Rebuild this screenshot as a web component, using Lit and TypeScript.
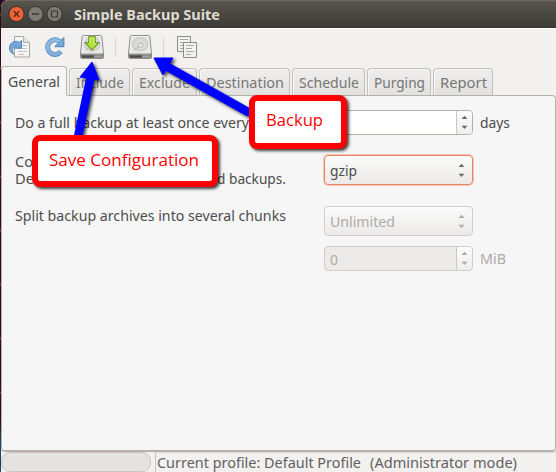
import { LitElement, html, svg, css } from "lit";
import { customElement } from "lit/decorators.js";

const label = (text: string, w: number, size = 15, cls = "") => html`
  <svg class="label ${cls}" width=${w} height="20" overflow="visible">
    <text x="0" y="15" font-size=${size} textLength=${w} lengthAdjust="spacingAndGlyphs">${text}</text>
  </svg>`;

const arrows = html`<svg class="arrows" width="7" height="15" viewBox="0 0 7 15">
  <path d="M0.5 4 3.5 0.8 6.5 4zM0.5 10.8 3.5 14 6.5 10.8z" fill="currentColor"/></svg>`;

const drive = (withArrow: boolean) => html`
  <svg width="24" height="24" viewBox="0 0 24 24">
    <path d="M3.4.5h17.2q1 0 1.2 1L23.5 18v4.5q0 1-1 1h-21q-1 0-1-1V18L2.2 1.5q.2-1 1.2-1z" fill="#dcdcda" stroke="#8f908d"/>
    <path d="M3.6 1.5h16.8l1.7 15.5H1.9z" fill="#e3e3e1" stroke="#f6f6f5" stroke-width=".8"/>
    <ellipse cx="12.2" cy="9.2" rx="7.6" ry="6.6" fill="#dadad8" stroke="#c2c2c0"/>
    <ellipse cx="12.6" cy="10.2" rx="2.5" ry="1.9" fill="#efefee" stroke="#adadab" stroke-width=".8"/>
    <path d="M11 12q-3 .5-5 3.5" fill="none" stroke="#b0b0ae"/>
    <path d="M1 18.8h22v3.5q0 .8-1 .8H2q-1 0-1-.8z" fill="#7b7c79"/>
    <path d="M1.5 18.8h21" stroke="#c4c4c2"/>
    <path d="M2 21.6h12" stroke="#4a4b49" stroke-width="2"/>
    <path d="M14 21.6h8" stroke="#a2a2a0" stroke-width="2"/>
    ${withArrow ? svg`<path d="M8.8 1.8h6.4v6h3.5L12 15 5.3 7.8h3.5z" fill="#b3e03f" stroke="#5c9511" stroke-width="1.1"/>
      <path d="M9.9 8.8V3h4.2v5.9h2.2" fill="none" stroke="#e0f79c" stroke-width=".8"/>` : ""}
  </svg>`;

@customElement("app-root")
export class AppRoot extends LitElement {
  static styles = css`
    :host { display: block; width: 556px; height: 472px; overflow: hidden; position: relative; background: linear-gradient(#0000 420px, #1d4468 440px), repeating-linear-gradient(#2c0a22 0 13px, #8c3f22 14px 15px, #2c0a22 16px 54px); font-family: "Noto Sans", sans-serif; color: #4c4c4c; }
    * { box-sizing: border-box; }
    svg { display: block; flex: none; }
    .label { fill: currentColor; font-family: "Noto Sans", sans-serif; }
    .window { margin-left: 1px; height: 472px; display: flex; flex-direction: column; background: #f2f1f0; border-radius: 7px 0 0 0; overflow: hidden; }
    .title { height: 28px; flex: none; display: flex; align-items: center; padding-left: 7px; background: linear-gradient(#57554d, #3c3b37); border-top: 1px solid #6a675f; border-bottom: 1px solid #35342f; color: #dfdbd2; }
    .title .label { font-weight: 700; margin: 2px 0 0 10px; }
    .tools { height: 38px; flex: none; display: flex; align-items: center; padding: 0 0 2px 8px; border-top: 1px solid #fff; }
    .t1 { margin-right: 14px; } .t2 { margin-right: 15px; }
    .sep { width: 1px; height: 20px; background: #d9d6d2; margin: 0 12px 0 11px; }
    .tabs { height: 30px; flex: none; display: flex; align-items: flex-end; gap: 2px; position: relative; z-index: 1; }
    .tab { height: 28px; border: 1px solid #c2bfba; border-bottom: 1px solid #b4b1ab; border-radius: 4px 4px 0 0; background: linear-gradient(#efeeed, #e3e1df); color: #777674; padding: 4px 0 0 6px; box-shadow: inset 1px 1px #f8f8f7; }
    .tab.on { height: 30px; background: #f6f6f6; color: #4c4c4c; border-color: #b6b3ad; border-bottom-color: #f6f6f6; padding: 5px 0 0 6px; }
    .page { flex: 1; margin-top: -1px; border: 1px solid #b6b3ad; border-bottom: 2px solid #b6b3ad; border-radius: 0 4px 4px 4px; background: #f6f6f6; padding: 14px 0 0 13px; display: grid; grid-template-columns: 309px 149px 1fr; grid-template-rows: 25px 20px 30px 21px 30px 10px 25px; }
    .page > * { min-width: 0; }
    .l1 { padding-top: 3px; }
    .two { grid-row: 3; grid-column: 1; margin-top: -3px; display: flex; flex-direction: column; height: 40px; }
    .two .label { height: 17px; }
    .line { display: flex; justify-content: space-between; width: 271px; }
    .spin { display: flex; border: 1px solid #b4b1ab; border-radius: 4px; background: #fff; overflow: hidden; height: 25px; }
    .field { flex: 1; padding: 3px 0 0 5px; }
    .step { width: 16px; border-left: 1px solid #cac7c3; background: linear-gradient(#fcfcfc, #efeeed); display: flex; align-items: center; justify-content: center; color: #6a6a69; }
    .combo { height: 30px; border: 1px solid #c0bdb8; border-radius: 4px; background: linear-gradient(#fbfbfb, #ebeae8); display: flex; align-items: center; justify-content: space-between; padding: 0 7px 0 5px; color: #4c4c4c; }
    .combo .label { margin-top: 2px; }
    .combo .arrows { color: #6a6a69; }
    .focus { border-color: #e58560; box-shadow: 0 0 0 1px #f4c9b7; }
    .off, .combo.off, .combo.off .arrows, .off .step { color: #aeaaa5; }
    .off { border-color: #d0cdc8; }
    .spin.off { background: #ebeae9; }
    .unit { padding: 3px 0 0 7px; }
    .r1 { grid-row: 1; } .r3 { grid-row: 3; } .r5 { grid-row: 5; } .r7 { grid-row: 7; }
    .c1 { grid-column: 1; } .c2 { grid-column: 2; } .c3 { grid-column: 3; }
    .status { height: 20px; flex: none; display: flex; color: #62605e; }
    .bar { width: 150px; height: 20px; border: 1px solid #c8c5c0; border-radius: 9px; background: #e4e3e2; margin-right: 4px; }
    .msg { flex: 1; display: flex; gap: 9px; border-left: 1px solid #c6c3be; border-top: 1px solid #dad8d4; padding: 0 0 0 1px; }
    .notes { position: absolute; left: 0; top: 0; z-index: 2; filter: drop-shadow(2px 2px 1.5px #000a); }
    .note { position: absolute; z-index: 3; border: 6px solid #f00; border-radius: 8px; background: #fff; color: #f00; box-shadow: 2px 2px 3px #000b; }
    .note .label { font-family: "Open Sans", sans-serif; }
    .save { left: 32px; top: 135px; width: 186px; height: 52px; padding: 10px 0 0 11px; }
    .backup { left: 249px; top: 95px; width: 98px; height: 54px; padding: 10px 0 0 11px; }
  `;

  render() {
    const tabs: [string, number, number][] = [["Include", 61, 48], ["Exclude", 65, 51], ["Destination", 91, 78], ["Schedule", 73, 60], ["Purging", 64, 51], ["Report", 60, 47]];
    return html`
      <div class="window">
        <div class="title">
          <svg width="56" height="18" viewBox="0 0 56 18">
            <circle cx="8.5" cy="9" r="7.6" fill="#ee6237" stroke="#3b2a22"/>
            <path d="m5.8 6.3 5.4 5.4m0-5.4-5.4 5.4" stroke="#572416" stroke-width="1.3"/>
            <circle cx="27.5" cy="9" r="7.6" fill="#7d7b73" stroke="#34332f"/>
            <path d="M24 9h7" stroke="#3a3935" stroke-width="1.3"/>
            <circle cx="46.5" cy="9" r="7.6" fill="#7d7b73" stroke="#34332f"/>
            <path d="M43.5 6h6v6h-6z" fill="none" stroke="#3a3935" stroke-width="1.2"/>
          </svg>
          ${label("Simple Backup Suite", 146, 15)}
        </div>
        <div class="tools">
          <svg class="t1" width="22" height="22" viewBox="0 0 22 22">
            <path d="M5.5.5h9l6 6v14.500h-15z" fill="#f6f6f5" stroke="#a3a5a2"/>
            <path d="M14.500.5v6h6" fill="#e2e2e1" stroke="#b0b1ae"/>
            <path d="M11 9.500h7M9 12.500h9M9 15.500h9M9 18.500h6" stroke="#c3c4c2"/>
            <path d="M4.500 18.200C1.500 16.800 0 13.800.6 10.600 1.400 6.200 6.400 3.800 10.400 6.400L12.500 4.300v7.900H5.200l2.400-2.500C4.200 8.600 2.300 13.500 4.500 18.200z" fill="#78a9d8" stroke="#4a80b3" stroke-width=".9"/>
          </svg>
          <svg class="t2" width="20" height="22" viewBox="0 0 20 22">
            <path d="M15.900 15.600A7.400 7.400 0 1 1 15 5.600" fill="none" stroke="#5f93c4" stroke-width="5"/>
            <path d="M18.900 1.500v9.200H9.800z" fill="#78a9d8" stroke="#4a80b3" stroke-linejoin="round"/>
            <path d="M15.400 15.900A7.400 7.400 0 1 1 15.200 5.800" fill="none" stroke="#82b0dc" stroke-width="3.400"/>
            <path d="M3 13.600A7.600 7.600 0 0 1 14 4.900" fill="none" stroke="#a9caea" stroke-width="1"/>
          </svg>
          ${drive(true)}
          <div class="sep"></div>
          ${drive(false)}
          <div class="sep"></div>
          <svg width="22" height="24" viewBox="0 0 22 24">
            <path d="M1.500 1.500h13v15h-13z" fill="#f2f2f1" stroke="#8b8d8a"/>
            <path d="M4 4.500h8M4 7.500h8M4 10.500h4M4 13.500h4" stroke="#a9aaa7"/>
            <path d="M7.500 7.500h13v15h-13z" fill="#f2f2f1" stroke="#8b8d8a"/>
            <path d="M10 10.500h8M10 13.500h6M10 16.500h8M10 19.500h5" stroke="#a9aaa7"/>
          </svg>
        </div>
        <div class="tabs">
          <div class="tab on" style="width:66px">${label("General", 52)}</div>
          ${tabs.map(([t, w, tw]) => html`<div class="tab" style="width:${w}px">${label(t, tw)}</div>`)}
        </div>
        <div class="page">
          <div class="r1 c1 l1">${label("Do a full backup at least once every", 234)}</div>
          <div class="r1 c2 spin"><div class="field"></div><div class="step">${arrows}</div></div>
          <div class="r1 c3 unit">${label("days", 30)}</div>
          <div class="two">
            <div class="line">${label("Co", 18)}</div>
            <div class="line">${label("De", 19)}${label("d backups.", 69)}</div>
          </div>
          <div class="r3 c2 combo focus">${label("gzip", 27)}${arrows}</div>
          <div class="r5 c1">${label("Split backup archives into several chunks", 271)}</div>
          <div class="r5 c2 combo off">${label("Unlimited", 65)}${arrows}</div>
          <div class="r7 c2 spin off"><div class="field">${label("0", 8)}</div><div class="step">${arrows}</div></div>
          <div class="r7 c3 unit off">${label("MiB", 26)}</div>
        </div>
        <div class="status">
          <div class="bar"></div>
          <div class="msg">${label("Current profile: Default Profile", 204)}${label("(Administrator mode)", 147)}</div>
        </div>
      </div>
      <svg class="notes" width="556" height="200">
        <path d="M78 137 90 80M248 112 166 66" stroke="#00f" stroke-width="8.500" stroke-linecap="round"/>
        <path d="M92 62 99 80 80 77zM154 58 173 58 163 75z" fill="#00f" stroke="#00f" stroke-linejoin="round"/>
      </svg>
      <div class="note save">${label("Save Configuration", 150, 17)}</div>
      <div class="note backup">${label("Backup", 57, 17)}</div>
    `;
  }
}
